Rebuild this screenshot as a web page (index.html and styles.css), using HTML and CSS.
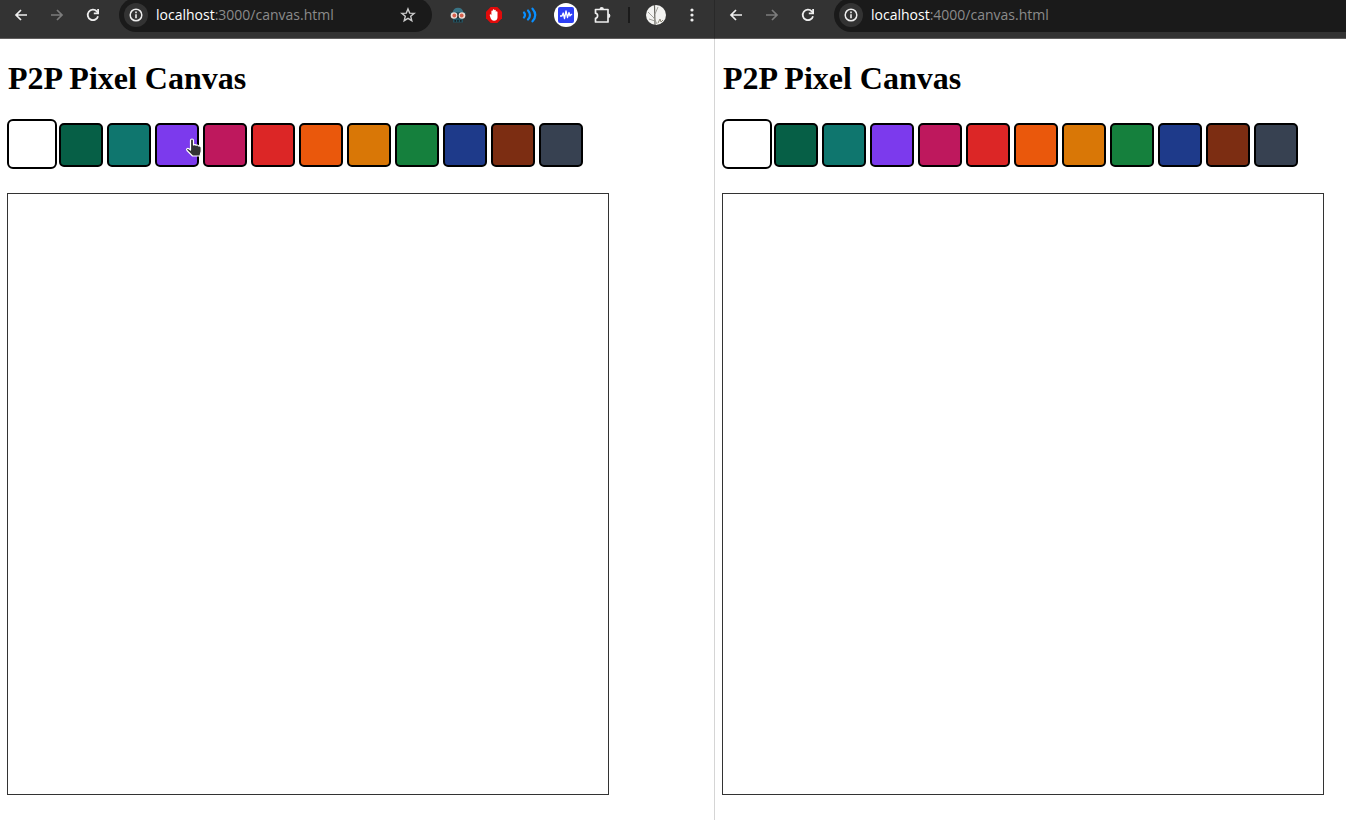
FILE: index.html
```html
<!DOCTYPE html>
<html lang="en">
<head>
<meta charset="utf-8">
<title>P2P Pixel Canvas</title>
<link rel="stylesheet" href="styles.css">
</head>
<body>
<svg class="defs" aria-hidden="true">
  <symbol id="back" viewBox="0 0 16 16"><path d="M14 8H3M8 3L3 8l5 5" fill="none" stroke="currentColor" stroke-width="1.7"/></symbol>
  <symbol id="forward" viewBox="0 0 16 16"><path d="M2 8h11M8 3l5 5-5 5" fill="none" stroke="currentColor" stroke-width="1.7"/></symbol>
  <symbol id="reload" viewBox="0 0 16 16"><path d="M13 9.2A5.2 5.2 0 1 1 11.8 4.400L13.200 6" fill="none" stroke="currentColor" stroke-width="1.8"/><path d="M14 2v5.200H8.800V5.600h3.400V2z" fill="currentColor"/></symbol>
  <symbol id="info" viewBox="0 0 16 16"><circle cx="8" cy="8" r="5.800" fill="none" stroke="currentColor" stroke-width="1.500"/><path d="M8 7.200v4M8 4.600v1.600" stroke="currentColor" stroke-width="1.600"/></symbol>
</svg>
<main class="windows">
  <section class="window window-first">
    <header class="toolbar">
      <nav class="nav">
        <button class="tool" aria-label="Back"><svg class="icon"><use href="#back"/></svg></button>
        <button class="tool muted" aria-label="Forward" disabled><svg class="icon"><use href="#forward"/></svg></button>
        <button class="tool" aria-label="Reload"><svg class="icon"><use href="#reload"/></svg></button>
      </nav>
      <div class="address">
        <button class="site" aria-label="Site information"><svg class="icon"><use href="#info"/></svg></button>
        <a class="url" href="#"><span class="host">localhost</span>:3000/canvas.html</a>
        <button class="tool star" aria-label="Bookmark"><svg class="icon" viewBox="0 0 16 16"><path d="M8 1.900l1.700 4.200 4.500.3-3.500 2.900 1.100 4.400L8 11.300l-3.800 2.400 1.100-4.400-3.500-2.900 4.500-.3z" fill="none" stroke="currentColor" stroke-width="1.400"/></svg></button>
      </div>
      <div class="extensions">
        <button class="tool" aria-label="Incognito extension"><svg class="icon" viewBox="0 0 16 16"><path d="M2.500 6C3 2.500 5 .8 8 .8S13 2.500 13.500 6z" fill="#397486"/><path d="M0 5.200h16v1.500H0z" fill="#244c58"/><path d="M3 11h10v4.500H3z" fill="#235361"/><circle cx="4" cy="8.500" r="3.300" fill="#efe3dc"/><circle cx="12" cy="8.500" r="3.300" fill="#efe3dc"/><circle cx="4.300" cy="8.500" r="1.900" fill="#d6604d"/><circle cx="11.700" cy="8.500" r="1.900" fill="#d6604d"/><path d="M4.500 13.800H6M7.200 13.800h1.500M10 13.800h1.500" stroke="#171f22" stroke-width="1.800"/></svg></button>
        <button class="tool" aria-label="Ad blocker"><svg class="icon" viewBox="0 0 16 16"><path d="M4.700 0h6.600L16 4.700v6.600L11.300 16H4.700L0 11.300V4.700z" fill="#e20b0b"/><path d="M3.700 8.200c0-1.200 1.500-1 1.700 0V4.300c0-1 1.400-1 1.400 0V3c0-1 1.500-1 1.500 0v.5c0-1 1.500-1 1.500 0V5c0-1 1.700-1 1.700 0v5.400c0 2-1.500 3.300-3.400 3.300-2.100 0-3-1.300-3.600-2.900z" fill="#fff"/></svg></button>
        <button class="tool" aria-label="Volume"><svg class="icon" viewBox="0 0 16 16"><path d="M2 5.500q2 2.500 0 5M6 3.500q4 4.500 0 9M10.500 1.700q5.500 6.300 0 12.600" fill="none" stroke="#098fff" stroke-width="2.200" stroke-linecap="round"/></svg></button>
        <button class="tool" aria-label="Audio extension"><svg class="badge-icon" viewBox="0 0 24 24"><circle cx="12" cy="12" r="12" fill="#fff"/><rect x="4" y="4" width="16" height="16" rx="2" fill="#2e40f5"/><path d="M6 13h2l1.200-3 1.300 5.500L12 8l1.500 6.500L15 9.500l1 3.500 1-1.500h1.200" fill="none" stroke="#fff" stroke-width="1.300" stroke-linejoin="round"/></svg></button>
        <button class="tool" aria-label="Extensions"><svg class="puzzle-icon" viewBox="0 0 18 18"><path d="M2.500 3.500H15V16H2.500v-3.700c2.800-.6 2.800-4.500 0-5.100z" fill="none" stroke="currentColor" stroke-width="1.700" stroke-linejoin="round"/><path d="M6.500 3.200a2.200 2.200 0 0 1 4.400 0zM15.200 7.500a2.200 2.200 0 0 1 0 4.400z" fill="currentColor"/></svg></button>
        <span class="separator"></span>
        <button class="tool" aria-label="Profile"><svg class="avatar" viewBox="0 0 20 20"><circle cx="10" cy="10" r="10" fill="#f3f3f1"/><path d="M8.500 0l.5 20" stroke="#66655f" stroke-width="1.200"/><path d="M2 7l6 6 3 6M3 14l6 2M9 9l3-7" fill="none" stroke="#96958e" stroke-width=".9"/><path d="M12 18l2-4 1 3 2-2" stroke="#8c8777" fill="none"/></svg></button>
        <button class="tool" aria-label="Menu"><svg class="icon" viewBox="0 0 16 16"><g fill="currentColor"><circle cx="8" cy="3" r="1.600"/><circle cx="8" cy="8" r="1.600"/><circle cx="8" cy="13" r="1.600"/></g></svg></button>
      </div>
    </header>
    <div class="page">
      <h1 class="title">P2P Pixel Canvas</h1>
      <div class="palette">
        <button class="swatch white selected" aria-label="White"></button>
        <button class="swatch emerald" aria-label="Emerald"></button>
        <button class="swatch teal" aria-label="Teal"></button>
        <button class="swatch violet" aria-label="Violet"><svg class="pointer" viewBox="0 0 18 20"><path d="M5.500 4.200V2.500a1.500 1.500 0 0 1 3 0V7c.8-.8 2.200-.5 2.600.3.800-.6 2-.3 2.400.6 1.500-.3 2.700.6 2.700 2.100v3.500L15 18H7.500L2 12.500c-1.200-1.500.6-2.800 1.900-1.800l1.600 1.300z" fill="#333" stroke="#fff" stroke-width="1.200" stroke-linejoin="round"/></svg></button>
        <button class="swatch pink" aria-label="Pink"></button>
        <button class="swatch red" aria-label="Red"></button>
        <button class="swatch orange" aria-label="Orange"></button>
        <button class="swatch amber" aria-label="Amber"></button>
        <button class="swatch green" aria-label="Green"></button>
        <button class="swatch blue" aria-label="Blue"></button>
        <button class="swatch brown" aria-label="Brown"></button>
        <button class="swatch slate" aria-label="Slate"></button>
      </div>
      <canvas class="board" width="600" height="600"></canvas>
    </div>
  </section>
  <section class="window">
    <header class="toolbar">
      <nav class="nav">
        <button class="tool" aria-label="Back"><svg class="icon"><use href="#back"/></svg></button>
        <button class="tool muted" aria-label="Forward" disabled><svg class="icon"><use href="#forward"/></svg></button>
        <button class="tool" aria-label="Reload"><svg class="icon"><use href="#reload"/></svg></button>
      </nav>
      <div class="address address-open">
        <button class="site" aria-label="Site information"><svg class="icon"><use href="#info"/></svg></button>
        <a class="url" href="#"><span class="host">localhost</span>:4000/canvas.html</a>
      </div>
    </header>
    <div class="page">
      <h1 class="title">P2P Pixel Canvas</h1>
      <div class="palette">
        <button class="swatch white selected" aria-label="White"></button>
        <button class="swatch emerald" aria-label="Emerald"></button>
        <button class="swatch teal" aria-label="Teal"></button>
        <button class="swatch violet" aria-label="Violet"></button>
        <button class="swatch pink" aria-label="Pink"></button>
        <button class="swatch red" aria-label="Red"></button>
        <button class="swatch orange" aria-label="Orange"></button>
        <button class="swatch amber" aria-label="Amber"></button>
        <button class="swatch green" aria-label="Green"></button>
        <button class="swatch blue" aria-label="Blue"></button>
        <button class="swatch brown" aria-label="Brown"></button>
        <button class="swatch slate" aria-label="Slate"></button>
      </div>
      <canvas class="board" width="600" height="600"></canvas>
    </div>
  </section>
</main>
</body>
</html>
```
FILE: styles.css
```css
* { box-sizing: border-box; }
body { margin: 0; background: #fff; color: #000; }
button { padding: 0; border: 0; background: none; color: inherit; }
.defs { display: none; }

.windows { display: grid; grid-template-columns: 715fr 631fr; min-height: 100vh; }
.window { min-width: 0; }
.window-first { border-right: 1px solid #d5d5d5; }

.toolbar {
  display: flex;
  align-items: flex-start;
  height: 39px;
  background: #333;
  border-bottom: 1px solid #605e5e;
  color: #eee;
  overflow: hidden;
}
.window-first .toolbar { margin-right: -1px; border-right: 1px solid #292929; }
.nav { display: flex; gap: 6px; padding: 0 11px 0 6px; }
.tool { display: flex; align-items: center; justify-content: center; flex: none; width: 30px; height: 30px; }
.muted { color: #7c7c7c; }
.icon { display: block; width: 16px; height: 16px; }

.address {
  display: flex;
  align-items: center;
  flex: 1;
  min-width: 0;
  height: 34px;
  margin-top: -2px;
  padding: 0 9px 0 5px;
  background: #1a1a1a;
  border-radius: 17px;
}
.address-open { border-radius: 17px 0 0 17px; }
.site { display: flex; align-items: center; justify-content: center; width: 24px; height: 24px; border-radius: 50%; background: #333; }
.url { flex: 1; margin-left: 8px; color: #8b8b8b; font: 14px/20px "Open Sans", "Noto Sans", sans-serif; text-decoration: none; white-space: nowrap; }
.host { color: #fff; }
.star { color: #ccc; }

.extensions { display: flex; gap: 6px; align-items: center; padding: 0 7px 0 11px; }
.badge-icon { width: 24px; height: 24px; }
.puzzle-icon { width: 18px; height: 18px; }
.separator { width: 2px; height: 16px; margin: 0 5px; background: #1a1a1a; }
.avatar { width: 20px; height: 20px; }

.page { padding: 19px 7px 25px; }
.title { margin: 0 0 21px; padding-left: 1px; font: bold 32px/40px "Liberation Serif", serif; }
.palette { display: flex; gap: 4px; padding: 4px 4px 2px; margin-bottom: 24px; }
.swatch { position: relative; flex: none; width: 44px; height: 44px; border: 2px solid #000; border-radius: 5px; }
.selected { width: 50px; height: 50px; margin: -4px -2px -2px -4px; border-radius: 6px; }
.white { background: #fff; }
.emerald { background: #065f46; }
.teal { background: #0f766e; }
.violet { background: #7c3aed; }
.pink { background: #be185d; }
.red { background: #dc2626; }
.orange { background: #ea580c; }
.amber { background: #d97706; }
.green { background: #15803d; }
.blue { background: #1e3a8a; }
.brown { background: #7c2d12; }
.slate { background: #374151; }
.pointer { position: absolute; z-index: 1; left: 28px; top: 13px; width: 18px; height: 20px; }
.board { display: block; box-sizing: content-box; max-width: 100%; border: 1px solid #333; background: #fff; }
```
